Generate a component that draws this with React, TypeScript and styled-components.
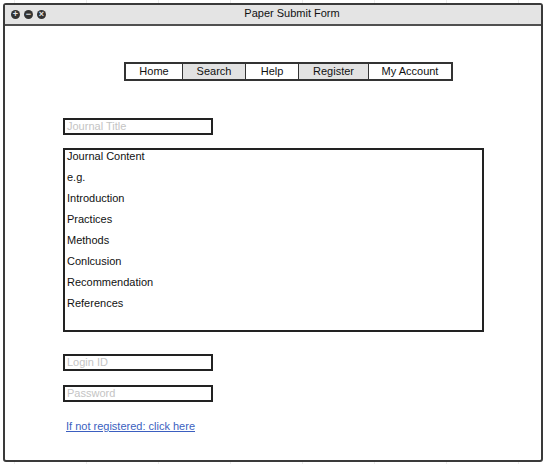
import React from "react";
import styled, { createGlobalStyle } from "styled-components";

const Global = createGlobalStyle`
  html, body { margin: 0; padding: 0; }
  body {
    width: 546px;
    height: 464px;
    background-color: #fff;
    background-image: repeating-linear-gradient(to right, transparent 0, transparent 14px, #ececec 14px, #ececec 15px, transparent 15px, transparent 72px);
    font-family: "Liberation Sans", Arial, sans-serif;
    overflow: hidden;
  }
  #root { padding: 3px; }
`;

const Window = styled.div`
  width: 536px;
  height: 455px;
  border: 2px solid #3a3a3a;
  border-radius: 3px;
  background: #fff;
  display: flex;
  flex-direction: column;
`;

const TitleBar = styled.div`
  height: 19px;
  background: #e4e4e4;
  border-bottom: 2px solid #505050;
  display: flex;
  align-items: center;
  position: relative;
  padding-left: 6px;
  gap: 4px;
`;

const Dot = styled.span`
  width: 9px;
  height: 9px;
  border-radius: 50%;
  background: #333;
  color: #e4e4e4;
  font-size: 9px;
  line-height: 9px;
  font-weight: bold;
  display: flex;
  align-items: center;
  justify-content: center;
`;

const Title = styled.div`
  position: absolute;
  left: 0;
  right: 0;
  top: 2px;
  text-align: center;
  font-size: 11px;
  color: #111;
  padding-left: 38px;
`;

const Body = styled.div`
  display: flex;
  flex-direction: column;
  padding: 36px 0 0 58px;
`;

const Nav = styled.div`
  display: flex;
  margin-left: 61px;
  border: 2px solid #333;
  width: fit-content;
`;

const NavItem = styled.div<{ $w: number; $active?: boolean }>`
  width: ${(p) => p.$w}px;
  height: 15px;
  line-height: 15px;
  text-align: center;
  font-size: 11px;
  color: #111;
  background: ${(p) => (p.$active ? "#e2e2e2" : "#fff")};
  & + & { border-left: 1px solid #333; }
`;

const Field = styled.div`
  width: 144px;
  height: 13px;
  border: 2px solid #222;
  font-size: 11px;
  line-height: 13px;
  color: #c4c4c4;
  padding-left: 2px;
`;

const TitleField = styled(Field)`
  margin-top: 37px;
`;

const ContentBox = styled.div`
  margin-top: 13px;
  border: 2px solid #222;
  display: flex;
  flex-direction: column;
  padding: 0 0 0 2px;
  box-sizing: border-box;
  width: 421px;
  height: 184px;
`;

const Line = styled.div`
  height: 21px;
  line-height: 12px;
  font-size: 11px;
  color: #111;
  flex-shrink: 0;
`;

const LoginField = styled(Field)<{ $mt: number }>`
  margin-top: ${(p) => p.$mt}px;
`;

const Link = styled.a`
  margin-top: 18px;
  margin-left: 3px;
  font-size: 11px;
  line-height: 13px;
  color: #3b5fc0;
  text-decoration: underline;
  width: fit-content;
`;

const lines = [
  "Journal Content",
  "e.g.",
  "Introduction",
  "Practices",
  "Methods",
  "Conlcusion",
  "Recommendation",
  "References",
];

export default function App() {
  return (
    <>
      <Global />
      <Window>
        <TitleBar>
          <Dot>+</Dot>
          <Dot>−</Dot>
          <Dot>×</Dot>
          <Title>Paper Submit Form</Title>
        </TitleBar>
        <Body>
          <Nav>
            <NavItem $w={56}>Home</NavItem>
            <NavItem $w={62} $active>Search</NavItem>
            <NavItem $w={52}>Help</NavItem>
            <NavItem $w={69} $active>Register</NavItem>
            <NavItem $w={82}>My Account</NavItem>
          </Nav>
          <TitleField>Journal Title</TitleField>
          <ContentBox>
            {lines.map((l) => (
              <Line key={l}>{l}</Line>
            ))}
          </ContentBox>
          <LoginField $mt={22}>Login ID</LoginField>
          <LoginField $mt={14}>Password</LoginField>
          <Link href="#">If not registered: click here</Link>
        </Body>
      </Window>
    </>
  );
}
